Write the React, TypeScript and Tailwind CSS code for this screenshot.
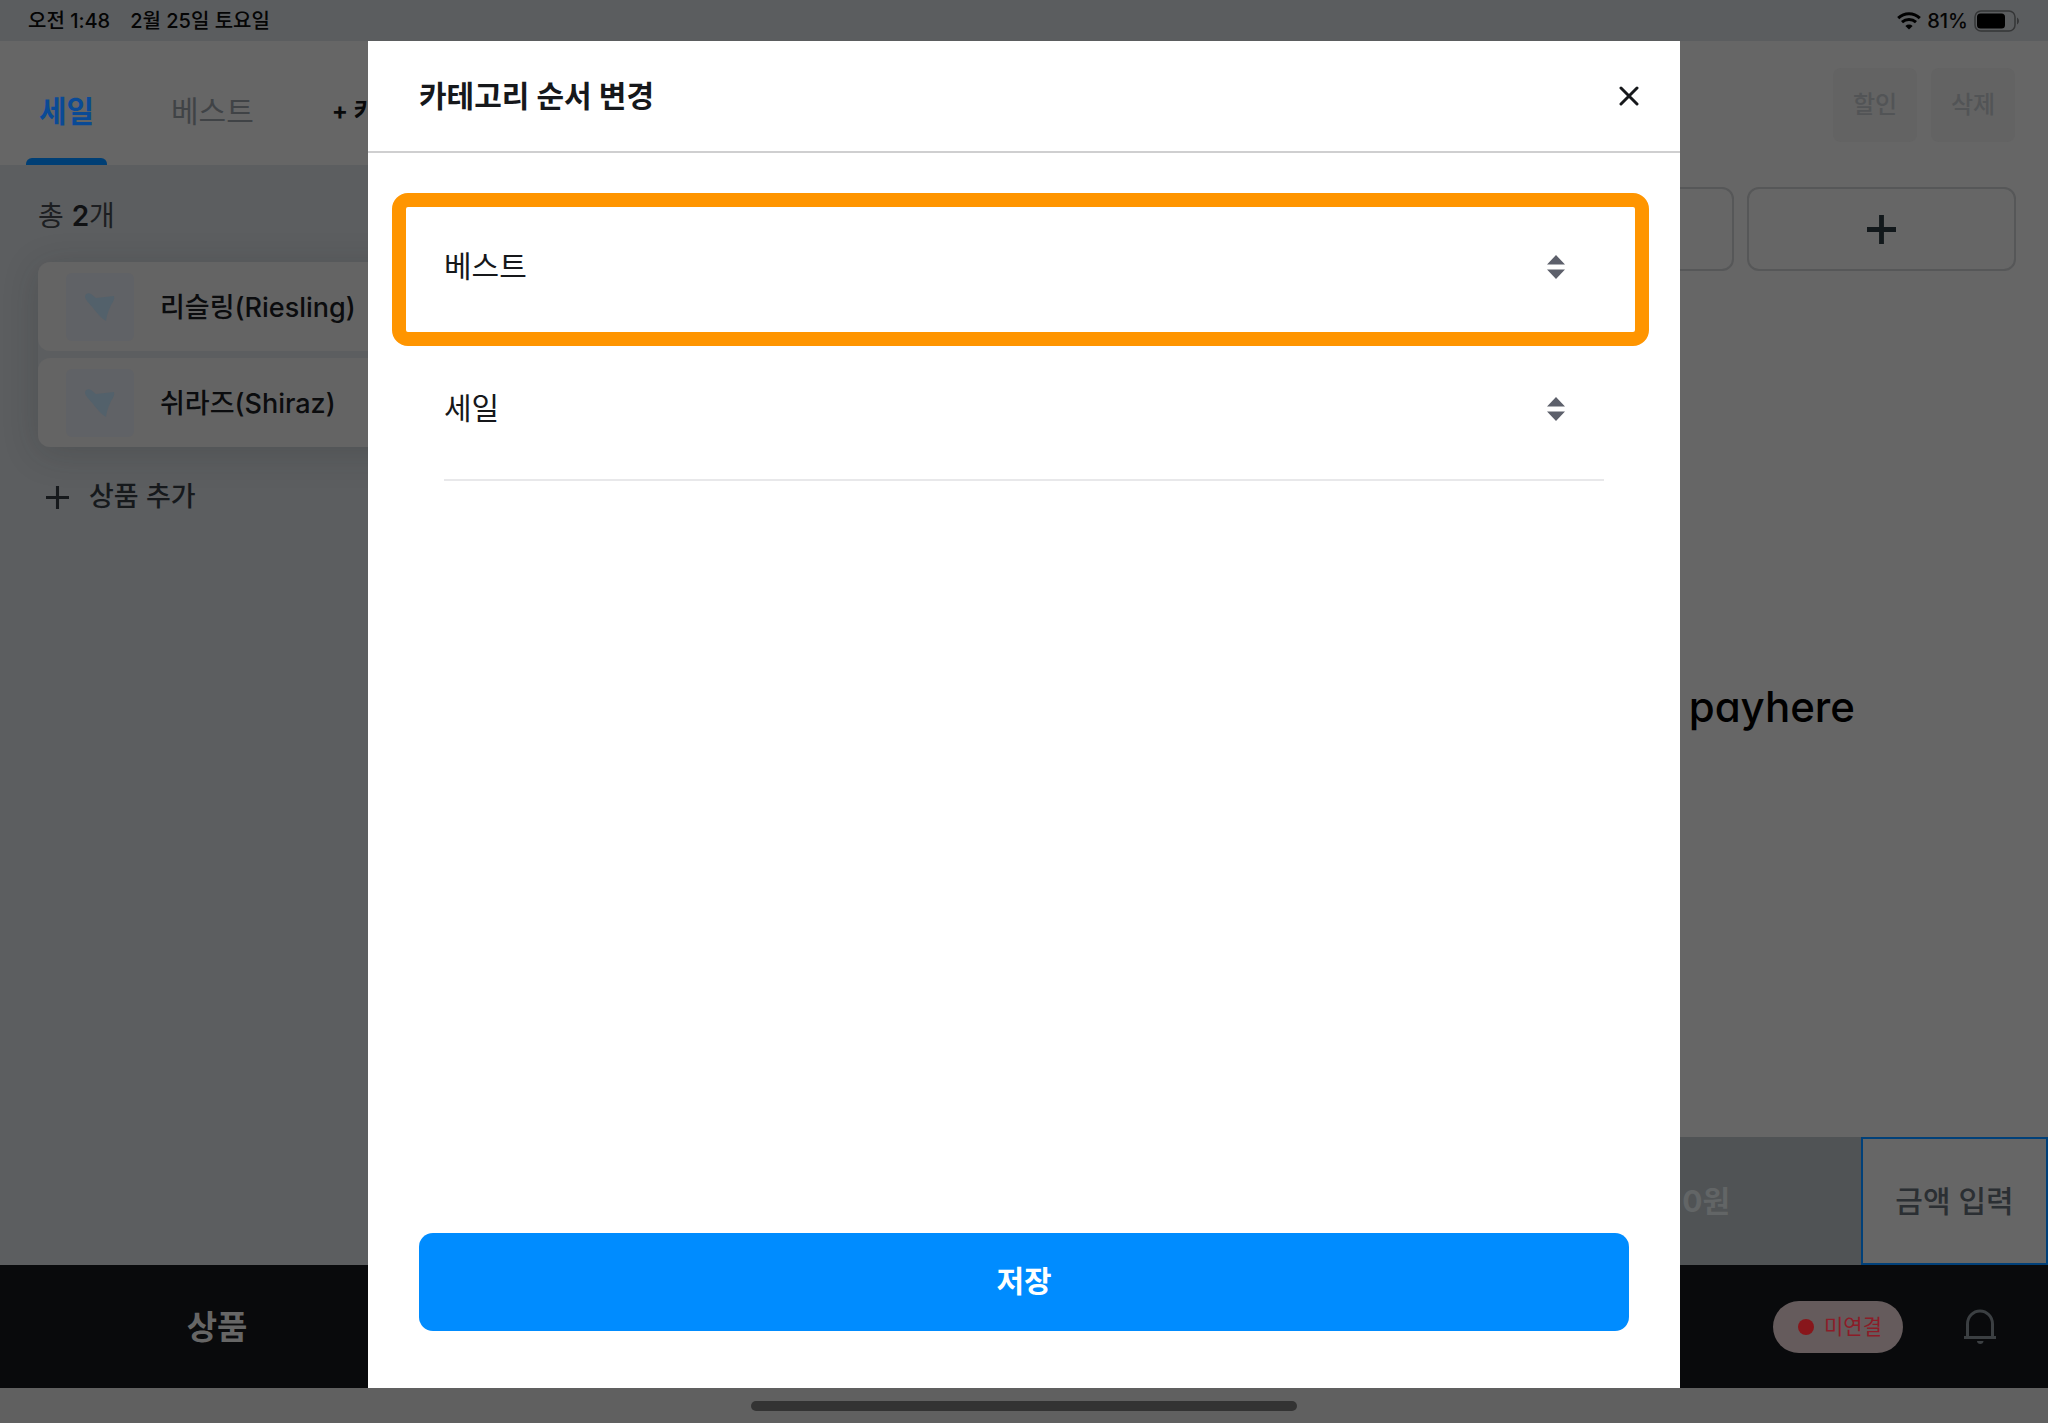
import React from 'react';

interface Product {
  id: number;
  name: string;
}

interface Category {
  id: number;
  name: string;
  highlighted: boolean;
}

const products: Product[] = [
  { id: 1, name: '리슬링(Riesling)' },
  { id: 2, name: '쉬라즈(Shiraz)' },
];

const categories: Category[] = [
  { id: 1, name: '베스트', highlighted: true },
  { id: 2, name: '세일', highlighted: false },
];

const WifiIcon = () => (
  <svg className="w-6 h-[18px]" viewBox="0 0 24 18" fill="none" stroke="#000" strokeWidth={3}>
    <path d="M1.2 6.2C7.4.4 16.6.4 22.8 6.2" />
    <path d="M5 10.2c4-3.6 10-3.6 14 0" />
    <path d="M12 17.6l-3.6-3.7c2.1-1.8 5.1-1.8 7.2 0z" fill="#000" stroke="none" />
  </svg>
);

const BatteryIcon = () => (
  <svg className="w-[46px] h-[22px]" viewBox="0 0 46 22" fill="none">
    <rect x="1" y="1" width="40" height="20" rx="6" stroke="#353637" strokeWidth={1.5} />
    <rect x="3" y="3.5" width="28" height="15" rx="3.5" fill="#000" />
    <path d="M43 7.5c2.6 1.4 2.6 5.6 0 7z" fill="#353637" />
  </svg>
);

const PlusIcon = ({ className, strokeWidth }: { className: string; strokeWidth: number }) => (
  <svg className={className} viewBox="0 0 30 30" fill="none" stroke="currentColor" strokeWidth={strokeWidth}>
    <path d="M15 0v30M0 15h30" />
  </svg>
);

const HeartIcon = () => (
  <svg className="w-[30px] h-[30px]" viewBox="0 0 30 30" fill="#53616b">
    <path d="M0 5c0-3 3-5 6-3 2 1 3 3 5 4l18-2c1 3-1 6-3 9-2 5-4 9-5 16-5-3-9-8-13-13C5 12 1 9 0 5z" />
  </svg>
);

const BellIcon = () => (
  <svg className="w-8 h-9" viewBox="0 0 32 36" fill="none" stroke="#3b3f42" strokeWidth={3}>
    <path d="M3.5 28V15a12.5 13 0 0 1 25 0v13" />
    <path d="M0 28.5h32" />
    <path d="M13 32h6.5c0 2-1.5 3-3.2 3S13 34 13 32z" fill="#3b3f42" stroke="none" />
  </svg>
);

const SortIcon = () => (
  <svg className="w-[18px] h-6" viewBox="0 0 18 24" fill="#5d606b">
    <path d="M9 0l9 9.5H0zM9 24l9-9.5H0z" />
  </svg>
);

const CloseIcon = () => (
  <svg className="w-5 h-5" viewBox="0 0 20 20" fill="none" stroke="#16181b" strokeWidth={3} strokeLinecap="round">
    <path d="M2 2l16 16M18 2L2 18" />
  </svg>
);

const StatusBar = () => (
  <header className="flex h-[41px] items-center justify-between bg-[#5b5d5f] px-7 text-[20px] leading-6 font-medium text-[#050505]">
    <div className="flex gap-5">
      <span>오전 1:48</span>
      <span>2월 25일 토요일</span>
    </div>
    <div className="flex items-center">
      <WifiIcon />
      <span className="mx-[6px]">81%</span>
      <BatteryIcon />
    </div>
  </header>
);

const ProductPanel = () => (
  <section className="flex flex-1 flex-col bg-[#5c5e60]">
    <nav className="flex h-[124px] items-stretch bg-[#666] text-[30px] leading-9">
      <button className="relative ml-[26px] w-[81px] pt-4 font-bold text-[#0a4a96]">
        세일
        <span className="absolute inset-x-0 bottom-0 h-[7px] rounded-t-md bg-[#003f75]" />
      </button>
      <button className="ml-16 pt-4 text-[#404346]">베스트</button>
      <button aria-label="카테고리 추가" className="ml-[78px] pt-4 text-[24px] font-bold text-[#08090a]">
        + 카
      </button>
    </nav>

    <div className="px-[38px] pt-[33px]">
      <p className="text-[28px] leading-9 text-[#1d1f22]">
        총 <strong className="font-semibold text-[#101113]">2</strong>개
      </p>
      <ul className="mt-7 flex flex-col gap-[7px] rounded-xl shadow-[0_6px_36px_rgba(30,34,36,0.2)]">
        {products.map(product => (
          <li key={product.id} className="flex h-[89px] items-center rounded-xl bg-[#646464] pl-7">
            <span className="flex h-[68px] w-[68px] items-center justify-center rounded-md bg-[#606266]">
              <HeartIcon />
            </span>
            <span className="ml-[26px] pt-[2px] text-[27px] leading-9 font-medium text-[#0b0c0e]">{product.name}</span>
          </li>
        ))}
      </ul>
      <button className="mt-8 flex items-center gap-5 pl-2 text-[27px] leading-9 font-medium text-[#16191c]">
        <PlusIcon className="w-[23px] h-[23px]" strokeWidth={4} />
        상품 추가
      </button>
    </div>
  </section>
);

const OrderPanel = () => (
  <aside className="flex w-[43.75%] flex-col bg-[#666]">
    <div className="flex justify-end gap-[14px] px-[33px] pt-[27px] text-[24px] leading-8 font-medium text-[#525456]">
      <button className="h-[74px] w-[84px] rounded-lg bg-[#636363]">할인</button>
      <button className="h-[74px] w-[84px] rounded-lg bg-[#636363]">삭제</button>
    </div>
    <div className="mt-[45px] grid grid-cols-3 gap-[13px] px-8">
      <button aria-label="빈 칸" className="h-[84px] rounded-xl border-2 border-[#565758]" />
      <button aria-label="빈 칸" className="h-[84px] rounded-xl border-2 border-[#565758]" />
      <button aria-label="추가" className="flex h-[84px] items-center justify-center rounded-xl border-2 border-[#565758] text-[#12181b]">
        <PlusIcon className="w-[29px] h-[29px]" strokeWidth={5} />
      </button>
    </div>
    <div className="flex flex-1 items-center justify-end pt-[6px] pr-[193px]">
      <span className="text-[42px] leading-[52px] font-medium text-black [font-feature-settings:'cv11']">payhere</span>
    </div>
    <div className="flex h-32 text-[30px] leading-9">
      <button className="flex-1 bg-[#505355] pr-[131px] text-right font-bold text-[#626566]">0원</button>
      <button className="w-[187px] border-2 border-[#004079] bg-[#666] font-medium text-[#2b2f33]">금액 입력</button>
    </div>
  </aside>
);

const BottomNav = () => (
  <nav className="flex h-[123px] items-center justify-between bg-[#090a0c]">
    <button className="w-[434px] text-[33px] leading-10 font-bold text-[#666]">상품</button>
    <div className="flex items-center gap-[61px] pr-[52px]">
      <button className="flex h-[52px] w-[130px] items-center justify-center gap-[10px] rounded-full bg-[#655b5c] pl-1 text-[21px] leading-7 text-[#8c1c28]">
        <span className="h-4 w-4 rounded-full bg-[#88161b]" />
        미연결
      </button>
      <button aria-label="알림">
        <BellIcon />
      </button>
    </div>
  </nav>
);

const CategoryOrderDialog = () => (
  <div className="fixed inset-0 flex justify-center pt-[41px] pb-[35px]">
    <div role="dialog" aria-labelledby="category-order-title" className="flex w-full max-w-[1312px] flex-col bg-white">
      <div className="flex h-[112px] items-center justify-between border-b-2 border-[#cfcfd0] pr-[41px] pl-[51px]">
        <h2 id="category-order-title" className="text-[30px] leading-10 font-bold text-[#16181b]">
          카테고리 순서 변경
        </h2>
        <button aria-label="닫기">
          <CloseIcon />
        </button>
      </div>

      <ul className="flex-1 px-[76px] pt-11">
        {categories.map(category => (
          <li
            key={category.id}
            className="relative flex h-[142px] items-center justify-between border-b-2 border-[#e8e8ea] pr-[39px]"
          >
            <span className="pb-[2px] text-[30px] leading-10 text-[#16181b]">{category.name}</span>
            <button aria-label={category.name + ' 순서 이동'}>
              <SortIcon />
            </button>
            {category.highlighted && (
              <span className="pointer-events-none absolute -top-[4px] -right-[45px] -bottom-[9px] -left-[52px] rounded-2xl border-[14px] border-[#ff9500]" />
            )}
          </li>
        ))}
      </ul>

      <div className="px-[51px] pb-[57px]">
        <button className="h-[98px] w-full rounded-[14px] bg-[#008cff] pb-[2px] text-[30px] leading-10 font-bold text-white">
          저장
        </button>
      </div>
    </div>
  </div>
);

const App: React.FC = () => (
  <div className="flex min-h-screen flex-col bg-[#606060] font-[Inter,'Noto_Sans_CJK_KR',sans-serif]">
    <StatusBar />
    <main className="flex flex-1">
      <ProductPanel />
      <OrderPanel />
    </main>
    <BottomNav />
    <footer className="flex h-[35px] items-center justify-center">
      <span className="h-[10px] w-[546px] rounded-full bg-[#333]" />
    </footer>
    <CategoryOrderDialog />
  </div>
);

export default App;
